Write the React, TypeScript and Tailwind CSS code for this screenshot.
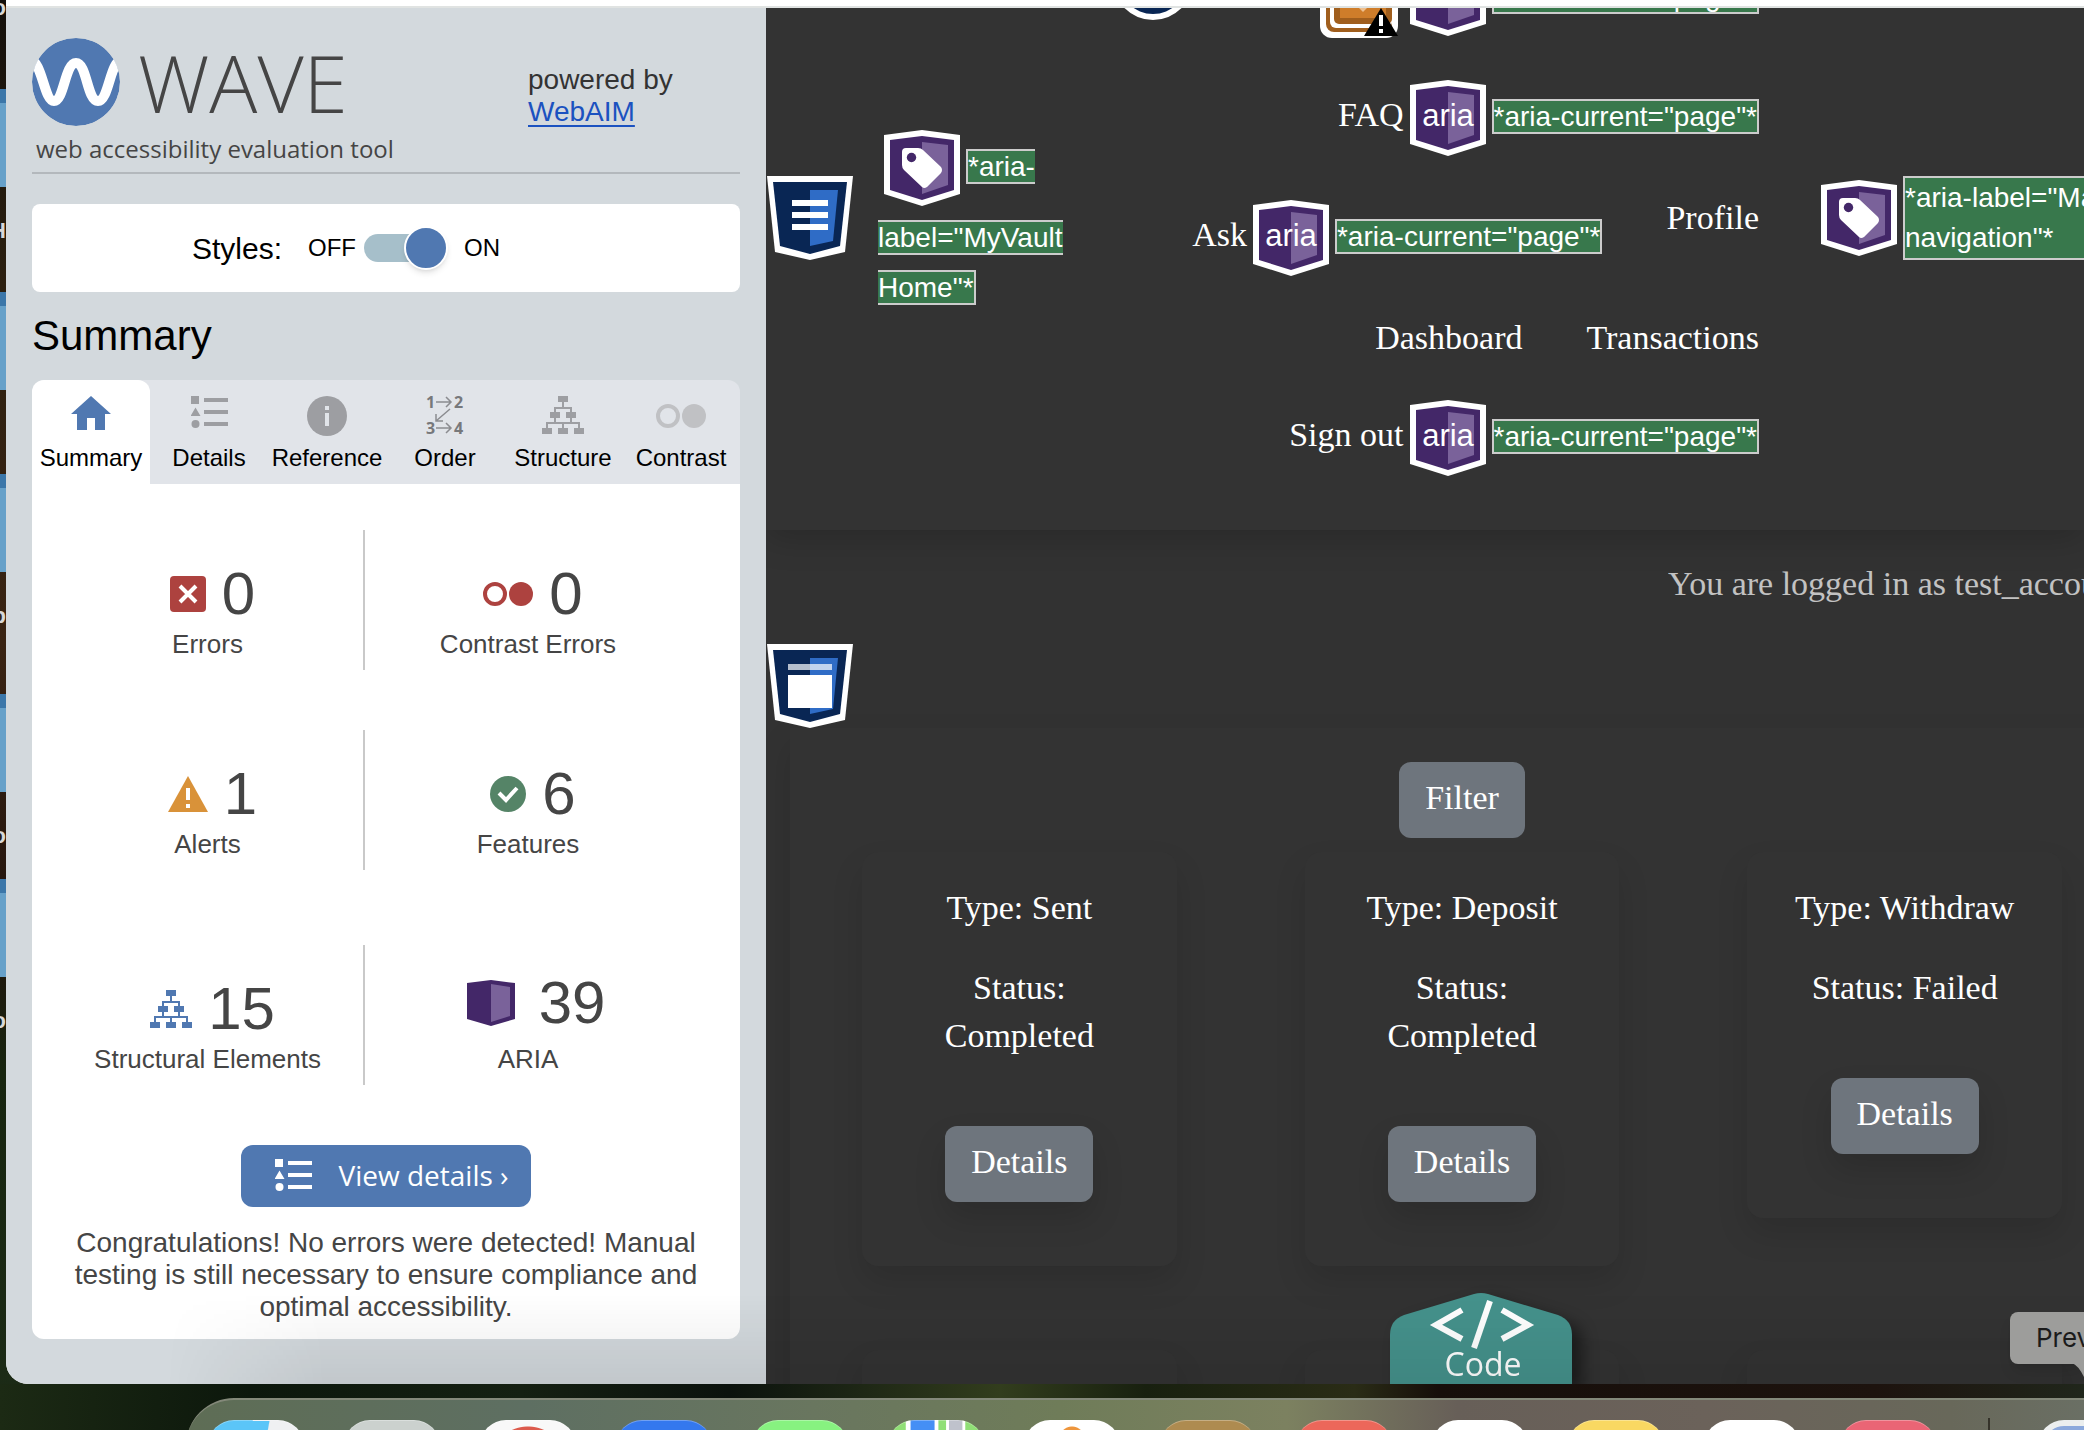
import type { ReactNode } from "react";

const HEX_OUTER = "0,5 38,0 76,5 76,64 38,76 0,64";

function AriaBadge({ kind }: { kind: "aria" | "tag" }) {
  return (
    <svg viewBox="0 0 76 76" className="m-1.5 inline-block h-[76px] w-[76px] shrink-0 align-middle" role="img" aria-label={kind === "tag" ? "ARIA label" : "ARIA"}>
      <polygon points={HEX_OUTER} fill="#fff" />
      <polygon points="6,10 38,6 70,10 70,60 38,70 6,60" fill="#432768" />
      <polygon points="38,12 64,15 64,55 38,64" fill="#7a629a" />
      {kind === "aria" ? (
        <text x="38" y="46" textAnchor="middle" fill="#fff" className="font-['Liberation_Sans',sans-serif] text-[31px]">aria</text>
      ) : (
        <>
          <path d="M18 22q0-4 4-4h12q3 0 5 2L57 37q2 3 0 6L43 57q-3 2-5 0L20 40q-2-2-2-5z" fill="#fff" />
          <circle cx="27.500" cy="27.500" r="4.700" fill="#432768" />
        </>
      )}
    </svg>
  );
}

function ShieldBadge({ children, label }: { children: ReactNode; label: string }) {
  return (
    <svg viewBox="0 0 86 84" className="block h-[84px] w-[86px] shrink-0" role="img" aria-label={label}>
      <polygon points="0,0 86,0 78,76 43,84 8,76" fill="#fff" />
      <polygon points="6,6 80,6 73,70 43,78 13,70" fill="#092654" />
      <polygon points="43,14 71,14 66,65 43,70" fill="#2f6cc6" />
      {children}
    </svg>
  );
}

function Note({ children }: { children: ReactNode }) {
  return (
    <span className="border-2 border-[#cccccc] bg-[#38784c] font-['Liberation_Sans',sans-serif] text-[28px] text-white">{children}</span>
  );
}

function AriaItem({ children }: { children?: string }) {
  return (
    <li className="whitespace-nowrap">
      {children && <a href="#top">{children}</a>}
      <AriaBadge kind="aria" />
      <Note>*aria-current="page"*</Note>
    </li>
  );
}

function ListIcon({ className }: { className: string }) {
  return (
    <svg viewBox="0 0 37 32" className={className} fill="currentColor" aria-hidden="true">
      <path d="M0 0h8v8H0zM4.500 11.500L9.500 20H-.5zM13 2h24v4H13zM13 14h24v4H13zM13 26h24v4H13z" />
      <circle cx="4.500" cy="28" r="4" />
    </svg>
  );
}

function TreeIcon({ className }: { className: string }) {
  return (
    <svg viewBox="0 0 42 38" className={className} aria-hidden="true">
      <path d="M21 5v8M13 18v-6h16v6M13 20v8M29 20v8M5 34v-7h32v7M21 27v6" fill="none" stroke="currentColor" strokeWidth="2" />
      <path d="M16 0h10v6H16zM8 16h10v6H8zM24 16h10v6H24zM0 32h10v6H0zM16 32h10v6H16zM32 32h10v6H32z" fill="currentColor" />
    </svg>
  );
}

function ContrastIcon({ className }: { className: string }) {
  return (
    <svg viewBox="0 0 50 24" className={className} aria-hidden="true">
      <circle cx="12" cy="12" r="10" fill="none" stroke="currentColor" strokeWidth="4" />
      <circle cx="38" cy="12" r="12" fill="currentColor" />
    </svg>
  );
}

const tabs: { name: string; icon: ReactNode }[] = [
  {
    name: "Summary",
    icon: (
      <svg viewBox="0 0 40 34" className="h-[34px] w-10 text-[#5078b1]" fill="currentColor" aria-hidden="true">
        <path d="M20 0L40 18H34V34H24V22H16V34H6V18H0z" />
      </svg>
    ),
  },
  { name: "Details", icon: <ListIcon className="h-8 w-[37px] text-[#9d9ea2]" /> },
  {
    name: "Reference",
    icon: (
      <svg viewBox="0 0 40 40" className="h-10 w-10" aria-hidden="true">
        <circle cx="20" cy="20" r="20" fill="#9d9ea2" />
        <path d="M18 10h4v4h-4zM18 17h4v13h-4z" fill="#e1e4e9" />
      </svg>
    ),
  },
  {
    name: "Order",
    icon: (
      <svg viewBox="0 0 38 40" className="h-10 w-[38px]" aria-hidden="true">
        <g fill="#77787b" className="font-['Open_Sans'] text-[16px] font-bold">
          <text x="0" y="12">1</text>
          <text x="28" y="12">2</text>
          <text x="0" y="38">3</text>
          <text x="28" y="38">4</text>
        </g>
        <path d="M10 6h15M20 1l5 5-5 5M10 32h15M20 27l5 5-5 5M24 13L10 25M10 18v7h7" fill="none" stroke="#8b8c90" strokeWidth="1.500" />
      </svg>
    ),
  },
  { name: "Structure", icon: <TreeIcon className="h-[38px] w-[42px] text-[#9d9ea2]" /> },
  { name: "Contrast", icon: <ContrastIcon className="mt-2 h-6 w-[50px] text-[#c0c1c4]" /> },
];

function Stat({ icon, value, label, divided, raised }: { icon: ReactNode; value: string; label: string; divided?: boolean; raised?: boolean }) {
  return (
    <div className={divided ? "h-[140px] border-r-2 border-[#c9c9c9] text-center" : "h-[140px] text-center"}>
      <div className={raised ? "flex h-[94px] items-end justify-center gap-6 pb-1.5 pl-4" : "flex h-[94px] items-end justify-center gap-4 pl-2.5"}>
        <span className="flex h-[60px] items-center">{icon}</span>
        <span className="text-[60px] leading-[60px]">{value}</span>
      </div>
      <div className="mt-1 text-[26px] leading-8">{label}</div>
    </div>
  );
}

function Sidebar() {
  return (
    <aside className="flex w-[760px] shrink-0 flex-col bg-[#d3d9dd] px-[26px] pt-[30px] font-['Liberation_Sans',sans-serif] text-[#454545]">
      <header className="flex justify-between border-b-2 border-[#b3b8bc] pb-[7px]">
        <div>
          <div className="flex h-[88px] items-center gap-[18px]">
            <svg viewBox="0 0 88 88" className="h-[88px] w-[88px]" aria-hidden="true">
              <clipPath id="logo-disc"><circle cx="44" cy="44" r="44" /></clipPath>
              <g clipPath="url(#logo-disc)">
                <circle cx="44" cy="44" r="44" fill="#5078b1" />
                <path d="M-2 22C10 22 12 63 22 63S33 25 44 25S55 63 66 63S78 22 90 22" fill="none" stroke="#fff" strokeWidth="10" />
              </g>
            </svg>
            <h1 className="font-['Open_Sans',sans-serif] text-[80px] leading-[88px] font-light text-[#454545]">WAVE</h1>
          </div>
          <p className="mt-[7px] ml-1 font-['Open_Sans',sans-serif] text-[24px] leading-8">web accessibility evaluation tool</p>
        </div>
        <p className="w-[212px] pt-[26px] text-[28px] leading-8 text-[#333]">
          powered by
          <br />
          <a href="#webaim" className="text-[#1b52c0] underline underline-offset-4">WebAIM</a>
        </p>
      </header>

      <div className="mt-[30px] flex h-[88px] items-center rounded-lg bg-white pr-[80px] pl-[160px] text-black">
        <span className="mr-[26px] text-[30px]">Styles:</span>
        <label className="flex items-center text-[24px]">
          OFF
          <input type="checkbox" role="switch" defaultChecked aria-label="Styles" className="sr-only" />
          <span className="mx-2 flex h-7 w-[84px] items-center">
            <span className="-mr-10 h-7 w-20 shrink-0 rounded-full bg-[#a6bfca]" />
            <span className="h-11 w-11 shrink-0 rounded-full border-2 border-white bg-[#5078b1] shadow-md" />
          </span>
          <span className="ml-2">ON</span>
        </label>
      </div>

      <h2 className="mt-5 text-[42px] leading-[48px] text-black">Summary</h2>

      <div role="tablist" className="mt-5 grid shrink-0 grid-cols-6 rounded-t-xl bg-[#e1e4e9] text-black">
        {tabs.map((t, i) => (
          <button
            key={t.name}
            role="tab"
            aria-selected={i === 0}
            className={i === 0 ? "flex h-[104px] flex-col items-center rounded-t-xl bg-white pt-4" : "flex h-[104px] flex-col items-center pt-4"}
          >
            <span className="mb-2 flex h-10 items-start">{t.icon}</span>
            <span className="text-[24px] leading-7">{t.name}</span>
          </button>
        ))}
      </div>

      <section className="flex shrink-0 flex-col rounded-b-xl bg-white pb-4">
        <div className="grid grid-cols-[313fr_326fr] pt-[46px] pr-[49px] pl-5">
          <Stat
            divided
            value="0"
            label="Errors"
            icon={
              <svg viewBox="0 0 36 36" className="h-9 w-9" aria-hidden="true">
                <rect width="36" height="36" rx="4" fill="#ad423f" />
                <path d="M10 10l16 16M26 10L10 26" stroke="#fff" strokeWidth="4" />
              </svg>
            }
          />
          <Stat value="0" label="Contrast Errors" icon={<ContrastIcon className="h-6 w-[50px] text-[#ad423f]" />} />
        </div>
        <div className="grid grid-cols-[313fr_326fr] pt-[60px] pr-[49px] pl-5">
          <Stat
            divided
            value="1"
            label="Alerts"
            icon={
              <svg viewBox="0 0 40 36" className="h-9 w-10" aria-hidden="true">
                <path d="M20 0L40 36H0z" fill="#d99239" />
                <path d="M18 12h4v12h-4zM18 28h4v4h-4z" fill="#fff" />
              </svg>
            }
          />
          <Stat
            value="6"
            label="Features"
            icon={
              <svg viewBox="0 0 36 36" className="h-9 w-9" aria-hidden="true">
                <circle cx="18" cy="18" r="18" fill="#558467" />
                <path d="M9 17l7 7L27 12" fill="none" stroke="#fff" strokeWidth="4" />
              </svg>
            }
          />
        </div>
        <div className="grid grid-cols-[313fr_326fr] pt-[75px] pr-[49px] pl-5">
          <Stat divided value="15" label="Structural Elements" icon={<TreeIcon className="h-[38px] w-[42px] text-[#5078b1]" />} />
          <Stat
            raised
            value="39"
            label="ARIA"
            icon={
              <svg viewBox="0 0 48 46" className="h-[46px] w-12" aria-hidden="true">
                <polygon points="0,3 24,0 48,3 48,39 24,46 0,39" fill="#432768" />
                <polygon points="24,4 43,7 43,36 24,42" fill="#7a629a" />
              </svg>
            }
          />
        </div>
        <button className="mt-[60px] flex h-[62px] items-center gap-[26px] self-center rounded-xl bg-[#5078b1] pr-[22px] pb-0.5 pl-[34px] font-['Open_Sans',sans-serif] text-[28px] text-white">
          <ListIcon className="h-8 w-[37px]" />
          View details ›
        </button>
        <p className="mt-5 px-8 text-center text-[28px] leading-8">
          Congratulations! No errors were detected! Manual testing is still necessary to ensure compliance and optimal accessibility.
        </p>
      </section>
    </aside>
  );
}

const transactions = [
  { type: "Sent", status: "Completed" },
  { type: "Deposit", status: "Completed" },
  { type: "Withdraw", status: "Failed" },
];

function TransactionCard({ type, status }: { type: string; status: string }) {
  return (
    <article className="mx-16 rounded-2xl bg-[#333333] px-10 pt-8 pb-16 text-center shadow-[0_16px_32px_rgba(0,0,0,0.12)]">
      <p>Type: {type}</p>
      <p className="mt-8">Status: {status}</p>
      <button className="mt-[66px] h-[76px] rounded-xl bg-[#6e757d] px-[26px] pb-1 text-white shadow-[0_16px_32px_rgba(0,0,0,0.14)]">Details</button>
    </article>
  );
}

function Page() {
  return (
    <main className="relative min-w-0 flex-1 overflow-hidden bg-[#323232] font-['Liberation_Serif',serif] text-[34px] leading-[48px] text-white">
      <div className="-mt-[54px] flex items-center bg-[#333333] pb-12 shadow-[0_8px_32px_rgba(0,0,0,0.18)]">
        <div className="pl-px">
          <ShieldBadge label="Navigation">
            <path d="M25 24h36v6H25zM25 36h36v6H25zM25 48h36v6H25z" fill="#fff" />
          </ShieldBadge>
        </div>
        <a href="#home" className="ml-[25px] w-[212px]">
          <AriaBadge kind="tag" />
          <Note>*aria-label="MyVault Home"*</Note>
        </a>
        <nav className="ml-auto" aria-label="Main navigation">
          <ul className="flex flex-col gap-8">
            <li>
              <ul className="flex justify-end">
                <li className="mr-[121px]">
                  <svg viewBox="0 0 80 80" className="-mt-3.5 h-20 w-20" aria-hidden="true">
                    <circle cx="40" cy="40" r="40" fill="#fff" />
                    <circle cx="40" cy="40" r="34" fill="#092654" />
                  </svg>
                </li>
                <li>
                  <svg viewBox="0 0 78 78" className="mx-1.5 mt-1.5 h-[78px] w-[78px]" role="img" aria-label="Alert">
                    <rect width="78" height="78" rx="12" fill="#fff" />
                    <rect x="6" y="6" width="66" height="66" rx="8" fill="#a05e1d" />
                    <rect x="10" y="10" width="62" height="58" rx="6" fill="#fff" />
                    <rect x="14" y="14" width="58" height="50" rx="5" fill="#a05e1d" />
                    <rect x="20" y="20" width="46" height="38" fill="#cf7d2a" />
                    <path d="M37 46h12l-6 6z" fill="#eec090" />
                    <path d="M61 48L78 76H44z" fill="#000" />
                    <path d="M59 55h4v11h-4zM59 69h4v4h-4z" fill="#fff" />
                  </svg>
                </li>
                <AriaItem />
              </ul>
            </li>
            <li><ul className="flex justify-end"><AriaItem>FAQ</AriaItem></ul></li>
            <li>
              <ul className="flex items-start justify-end gap-16">
                <AriaItem>Ask</AriaItem>
                <li><a href="#profile">Profile</a></li>
              </ul>
            </li>
            <li>
              <ul className="flex justify-end gap-16">
                <li><a href="#dashboard">Dashboard</a></li>
                <li><a href="#transactions">Transactions</a></li>
              </ul>
            </li>
            <li><ul className="flex justify-end"><AriaItem>Sign out</AriaItem></ul></li>
          </ul>
        </nav>
        <div className="ml-14 flex w-[269px] shrink-0 items-center overflow-hidden">
          <AriaBadge kind="tag" />
          <p className="w-[240px] shrink-0 border-2 border-[#cccccc] bg-[#38784c] font-['Liberation_Sans',sans-serif] text-[28px] leading-10">*aria-label="Main navigation"*</p>
        </div>
      </div>

      <p className="mt-[30px] ml-auto w-[416px] overflow-hidden whitespace-nowrap text-[#c2c2c2]">You are logged in as test_account</p>

      <div className="mt-9 pl-px">
        <ShieldBadge label="Main content">
          <path d="M21 20h44v6H21z" fill="#fff" fillOpacity="0.700" />
          <path d="M21 31h44v33H21z" fill="#fff" />
        </ShieldBadge>
      </div>

      <section className="-mr-[50px] ml-6 bg-[#333333] px-2 pt-[34px] pb-16 shadow-[0_16px_32px_rgba(0,0,0,0.12)]">
        <div className="flex justify-center">
          <button className="h-[76px] rounded-xl bg-[#6e757d] px-[26px] pb-1 text-white">Filter</button>
        </div>
        <div className="mt-3.5 grid grid-cols-3 items-start gap-y-[84px]">
          {transactions.map((t) => (
            <TransactionCard key={t.type} {...t} />
          ))}
          {transactions.map((t) => (
            <TransactionCard key={t.type} {...t} />
          ))}
        </div>
      </section>

      <button className="absolute bottom-0 left-[624px] h-[91px] w-[182px] text-white drop-shadow-[10px_8px_8px_rgba(0,0,0,0.45)]">
        <svg viewBox="0 0 182 91" className="absolute inset-0 h-full w-full" aria-hidden="true">
          <path d="M0 91V42Q0 27 14 22L84 1Q91-1 98 1L168 22Q182 27 182 42V91z" fill="#45928c" />
          <path d="M72 17L46 32L72 46M112 17L138 32L112 46" fill="none" stroke="#fff" strokeWidth="6" />
          <path d="M100 8L84 55" stroke="#fff" strokeWidth="6" />
        </svg>
        <span className="relative block pt-[50px] pl-1 font-['Open_Sans',sans-serif] text-[32px] leading-[42px]">Code</span>
      </button>
    </main>
  );
}

const dockColors = [
  "bg-[linear-gradient(100deg,#5bc5f8_54%,#eff0f2_55%)]",
  "bg-[#cbd1ce]",
  "bg-[radial-gradient(circle_at_50%_44px,#dc5a4c_0_38px,#f8f8f8_39px)]",
  "bg-[#3478ee]",
  "bg-[#87f280]",
  "bg-[linear-gradient(90deg,#90df76_18%,#fff_19%_23%,#458ff5_24%_48%,#fff_49%_52%,#90df76_53%_60%,#fff_61%_63%,#bfc2cc_64%_77%,#fff_78%_80%,#90df76_81%)]",
  "bg-[radial-gradient(circle_at_50%_18px,#ee963d_0_12px,#ffffff_13px)]",
  "bg-[#ae8b50]",
  "bg-[#ec675a]",
  "bg-white",
  "bg-[#f9d862]",
  "bg-white",
  "bg-[#ea6575]",
];

const folders = [
  { name: "o", place: "-top-[134px]" },
  { name: "H", place: "top-[89px]" },
  { name: "", place: "top-[292px]" },
  { name: "p", place: "top-[474px]" },
  { name: "o", place: "top-[694px]" },
  { name: "o", place: "top-[879px]" },
];

export default function App() {
  return (
    <div className="relative flex h-screen flex-col overflow-hidden bg-[linear-gradient(180deg,#14100b_0%,#2c2010_20%,#3a2413_45%,#22140d_65%,#17250f_75%,#1c2b17_100%)]">
      {folders.map((f) => (
        <div key={f.place} className={`absolute left-0 w-1.5 overflow-hidden ${f.place}`}>
          <div className="h-[98px] border-t-[14px] border-[#3c77a9] bg-[#67a1c9]" />
          <div className="mt-8 flex justify-end font-['Liberation_Sans',sans-serif] text-[22px] leading-6 font-bold text-[#d8d8d8]">{f.name}</div>
        </div>
      ))}

      <div className="relative ml-1.5 flex min-h-0 flex-1 flex-col overflow-hidden rounded-bl-[22px] bg-white">
        <div className="mt-1.5 h-0.5 shrink-0 bg-[#e0e3e2]" />
        <div className="flex min-h-0 flex-1">
          <Sidebar />
          <Page />
        </div>
        <div className="pointer-events-none absolute right-0 bottom-0 left-[160px] h-[90px] bg-[linear-gradient(180deg,transparent,rgba(0,0,0,0.08))] [mask-image:linear-gradient(90deg,transparent,black_160px)]" />
        <div className="absolute right-0 bottom-5 h-[52px] w-[74px] rounded-l-lg bg-[#9d9d9b] shadow-lg">
          <div className="overflow-hidden pl-[26px] font-['Inter',sans-serif] text-[26px] leading-[52px] whitespace-nowrap text-[#1b1b1b]">Preview</div>
          <svg viewBox="0 0 12 14" className="absolute top-[51px] right-0 h-3.5 w-3" aria-hidden="true">
            <path d="M0 0H12V14Q6 2 0 0z" fill="#9d9d9b" />
          </svg>
        </div>
      </div>

      <footer className="h-[46px] shrink-0 bg-[linear-gradient(90deg,#1c2a14,#0c170c_12%,#152012_25%,#0b120d_35%,#323d1d_48%,#18200f_55%,#2a2c16_65%,#160e0a_69%,#1d130e_90%,#20261b)] pt-3.5">
        <div className="ml-[186px] flex h-20 gap-10 rounded-tl-[48px] border-t-2 border-[#84897a] bg-[linear-gradient(90deg,#5e6d55,#5e6f62_18%,#69765f_33%,#6f7c59_46%,#7c8160_58%,#675f58_67%,#6b625a_80%,#68685a_93%,#6a6f64)] pt-5 pl-[22px]">
          {dockColors.map((color, i) => (
            <button key={i} aria-label={`Dock application ${i + 1}`} className={`h-24 w-24 shrink-0 rounded-[26px] border-t border-white/30 ${color}`} />
          ))}
          <span className="-mt-0.5 ml-3 w-0.5 shrink-0 self-stretch bg-[#35332a]" />
          <button aria-label="Preview" className="ml-2 h-24 w-24 shrink-0 rounded-[26px] border-6 border-[#ecefef] bg-[#8ca9dc]" />
        </div>
      </footer>
    </div>
  );
}
